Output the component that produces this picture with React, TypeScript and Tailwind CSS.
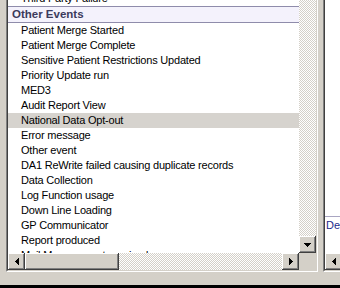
type Dir = "down" | "left" | "right";

const raised =
  "bg-[#d4d0c8] shadow-[inset_-1px_-1px_#404040,inset_1px_1px_#ffffff,inset_-2px_-2px_#808080,inset_2px_2px_#d4d0c8]";
const hatch =
  "bg-[repeating-conic-gradient(#d4d0c8_0_25%,#ffffff_0_50%)] bg-size-[2px_2px]";

const items = [
  "Patient Merge Started",
  "Patient Merge Complete",
  "Sensitive Patient Restrictions Updated",
  "Priority Update run",
  "MED3",
  "Audit Report View",
  "National Data Opt-out",
  "Error message",
  "Other event",
  "DA1 ReWrite failed causing duplicate records",
  "Data Collection",
  "Log Function usage",
  "Down Line Loading",
  "GP Communicator",
  "Report produced",
  "Mail Management received",
];

function Arrow({ dir }: { dir: Dir }) {
  if (dir === "down") {
    return (
      <svg width="7" height="4" viewBox="0 0 7 4" shapeRendering="crispEdges">
        <rect x="0" y="0" width="7" height="1" fill="#000" />
        <rect x="1" y="1" width="5" height="1" fill="#000" />
        <rect x="2" y="2" width="3" height="1" fill="#000" />
        <rect x="3" y="3" width="1" height="1" fill="#000" />
      </svg>
    );
  }
  const right = dir === "right";
  return (
    <svg width="4" height="7" viewBox="0 0 4 7" shapeRendering="crispEdges">
      <rect x={right ? 0 : 3} y="0" width="1" height="7" fill="#000" />
      <rect x={right ? 1 : 2} y="1" width="1" height="5" fill="#000" />
      <rect x={right ? 2 : 1} y="2" width="1" height="3" fill="#000" />
      <rect x={right ? 3 : 0} y="3" width="1" height="1" fill="#000" />
    </svg>
  );
}

function ScrollBtn({ dir }: { dir: Dir }) {
  return (
    <div className={`flex h-[17px] w-[17px] shrink-0 items-center justify-center ${raised}`}>
      <Arrow dir={dir} />
    </div>
  );
}

export default function App() {
  return (
    <div className="flex h-[288px] w-[340px] flex-col overflow-hidden bg-[#d4d0c8] font-['Liberation_Sans',Arial,sans-serif] text-black">
      <div className="flex h-[285px]">
        {/* left gutter */}
        <div className="w-[6px] shrink-0" />

        {/* event list */}
        <div className="flex h-[272px] w-[312px] shrink-0 flex-col border-l border-r border-b border-l-[#808080] border-r-white border-b-white">
          <div className="flex flex-1 flex-col border-l border-r border-b border-l-[#404040] border-r-[#d4d0c8] border-b-[#d4d0c8]">
            <div className="flex h-[253px]">
              <div className="flex-1 overflow-hidden bg-white">
                <div className="mt-[-9px]">
                  <div className="h-[15px] pl-[13px] text-[11px] leading-[15px] tracking-[-0.2px] whitespace-nowrap">
                    Third Party Failure
                  </div>
                  <div className="h-[17px] border-y border-[#8f8cab] bg-[#f4f2fc] pl-[4px] text-[11.5px] leading-[15px] font-bold text-[#3c3a5c]">
                    Other Events
                  </div>
                  {items.map((t) => (
                    <div
                      key={t}
                      className={`h-[15px] pl-[13px] text-[11px] leading-[15px] tracking-[-0.2px] whitespace-nowrap ${
                        t === "National Data Opt-out" ? "bg-[#d6d3ce]" : ""
                      }`}
                    >
                      {t}
                    </div>
                  ))}
                </div>
              </div>
              <div className="flex w-[17px] shrink-0 flex-col">
                <div className={`flex-1 ${hatch}`} />
                <ScrollBtn dir="down" />
              </div>
            </div>
            <div className="flex h-[17px]">
              <ScrollBtn dir="left" />
              <div className={`w-[94px] shrink-0 ${raised}`} />
              <div className={`flex-1 ${hatch}`} />
              <ScrollBtn dir="right" />
              <div className="w-[17px] shrink-0 bg-[#d4d0c8]" />
            </div>
          </div>
        </div>

        {/* gap */}
        <div className="w-[5px] shrink-0" />

        {/* right panel */}
        <div className="flex h-[272px] flex-1 flex-col border-l border-b border-l-[#808080] border-b-white">
          <div className="flex flex-1 flex-col border-l border-b border-l-[#404040] border-b-[#d4d0c8]">
            <div className="flex h-[253px] flex-col bg-white">
              <div className="h-[216px]" />
              <div className="flex-1 border-t border-r-2 border-t-[#a9a6c2] border-r-black pl-[1px] pt-[2px] text-[11px] leading-[13px] text-[#1c2a8c]">
                De
              </div>
            </div>
            <div className="flex h-[17px] bg-[#d4d0c8]">
              <ScrollBtn dir="left" />
            </div>
          </div>
        </div>
      </div>
      <div className="h-[3px] bg-black" />
    </div>
  );
}
